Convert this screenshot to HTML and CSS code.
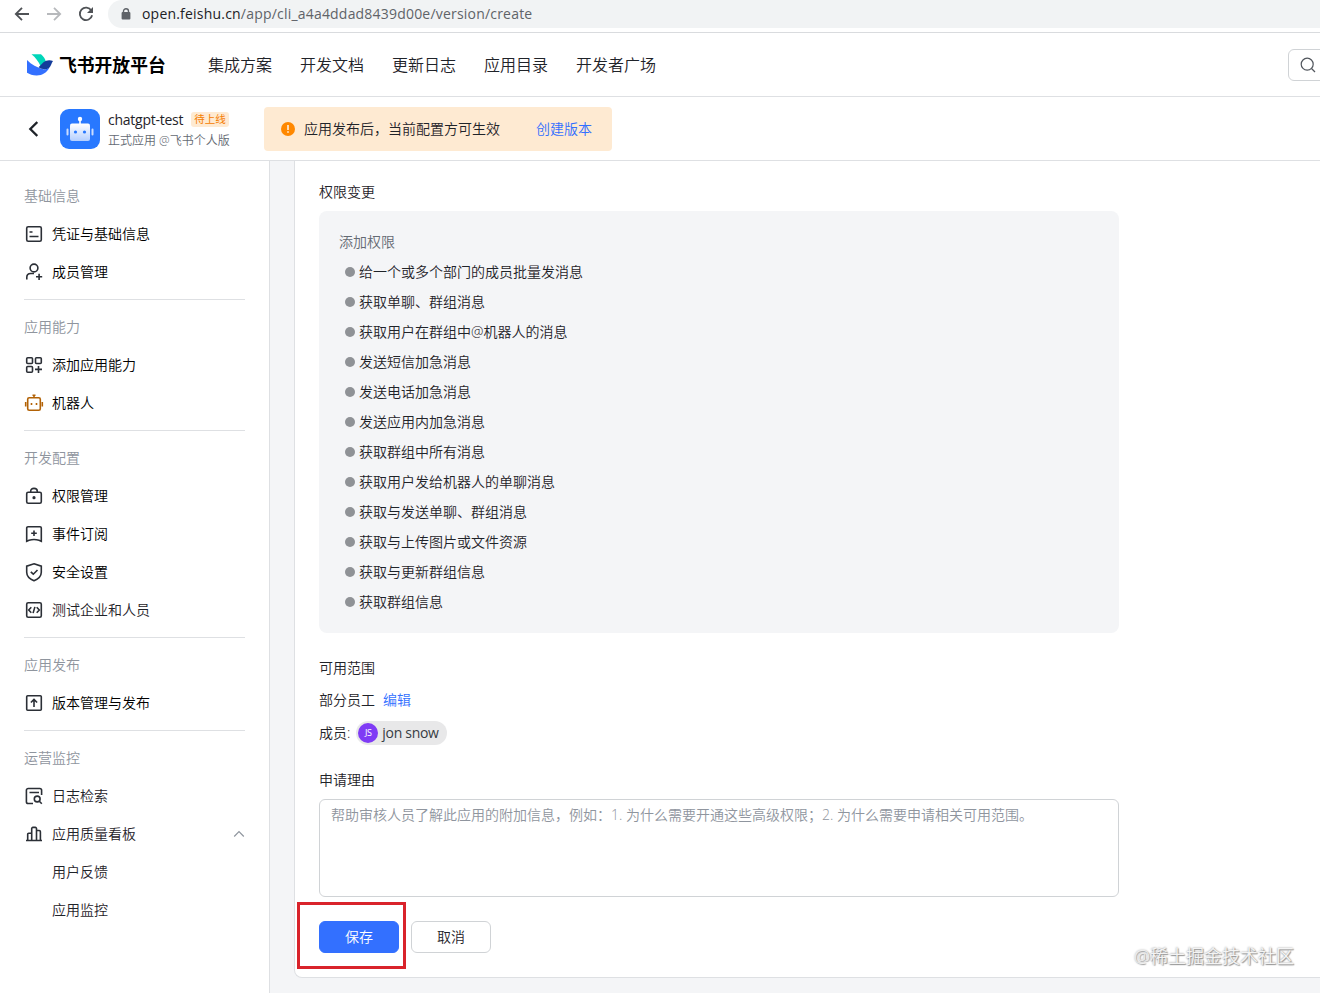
FILE: index.html
```html
<!DOCTYPE html>
<html lang="zh-CN">
<head>
    <meta charset="UTF-8">
    <meta name="viewport" content="width=device-width, initial-scale=1.0">
    <title>飞书开放平台</title>
    <link rel="stylesheet" href="styles.css">
</head>
<body>
    <!-- 浏览器地址栏 -->
    <div class="browser-bar">
        <svg class="browser-icon" width="16" height="16" viewBox="0 0 16 16"><path d="M15 8H2M8 1.8L1.8 8L8 14.2" stroke="#4f5256"/></svg>
        <svg class="browser-icon" width="16" height="16" viewBox="0 0 16 16"><path d="M1 8H14M8 1.8L14.2 8L8 14.2" stroke="#b7b9bc"/></svg>
        <svg class="browser-icon" width="16" height="16" viewBox="0 0 16 16"><path d="M13.3 4.6A6.2 6.2 0 1 0 14.1 9.2" stroke="#4f5256"/><path d="M15 1v6H9z" fill="#4f5256"/></svg>
        <div class="address">
            <svg width="10" height="12" viewBox="0 0 10 12"><path d="M2.5 5V3.2a2.5 2.5 0 0 1 5 0V5" fill="none" stroke="#5f6368" stroke-width="1.4"/><rect x="0.6" y="4" width="8.8" height="7.6" rx="1" fill="#5f6368"/></svg>
            <span class="url"><b>open.feishu.cn</b>/app/cli_a4a4ddad8439d00e/version/create</span>
        </div>
    </div>

    <!-- 顶部导航 -->
    <header class="nav">
        <svg class="logo" width="28" height="24" viewBox="0 0 28 24">
            <path d="M5.5 1.2H15C17.6 3.2 19.3 6 20 9L14.5 13C12.6 8.500 9.500 4.500 5.500 1.200z" fill="#00d6b9"/>
            <path d="M1 7C5.500 11.500 11 14.800 17.500 16.200C19.500 16.500 21.500 15.800 23.500 14.500C21 19.500 16.300 22.600 10.500 22.500C6.800 22.400 3.500 21.300 1 19.800z" fill="#3370ff"/>
            <path d="M27 8C24 6.700 20 7 17.500 9.300L12.500 14.200C15.500 16 19.500 17.300 23 15C25 13.500 25.300 10.300 27 8z" fill="#133c9a"/>
        </svg>
        <span class="brand">飞书开放平台</span>
        <nav class="nav-links">
            <a>集成方案</a>
            <a>开发文档</a>
            <a>更新日志</a>
            <a>应用目录</a>
            <a>开发者广场</a>
        </nav>
        <div class="search">
            <svg width="16" height="16" viewBox="0 0 16 16" fill="none" stroke="#51565d" stroke-width="1.2"><circle cx="7.200" cy="7.200" r="6"/><path d="M11.500 11.500L15 15"/></svg>
        </div>
    </header>

    <!-- 应用信息 -->
    <div class="app-bar">
        <svg class="back" width="12" height="18" viewBox="0 0 12 18"><path d="M11.300 2L4.300 9L11.300 16" fill="none" stroke="#1f2329" stroke-width="2.300"/></svg>
        <svg class="app-icon" width="40" height="40" viewBox="0 0 40 40">
            <defs>
                <linearGradient id="bot" x1="0" y1="0" x2="0" y2="1"><stop offset="0" stop-color="#fff"/><stop offset="1" stop-color="#b4cfff"/></linearGradient>
            </defs>
            <rect width="40" height="40" rx="9" fill="#2878ff"/>
            <circle cx="20" cy="10" r="2.200" fill="#fff"/>
            <path d="M19.200 11h1.600v4h-1.600z" fill="#fff"/>
            <rect x="10" y="14.500" width="20" height="17.500" rx="2" fill="url(#bot)"/>
            <path d="M7.500 20.500v5M32.500 20.500v5" stroke="#c9dcff" stroke-width="2" stroke-linecap="round"/>
            <circle cx="15.500" cy="23" r="1.600" fill="#2878ff"/>
            <circle cx="24.500" cy="23" r="1.600" fill="#2878ff"/>
        </svg>
        <div class="app-info">
            <div class="app-name"><span>chatgpt-test</span><span class="tag">待上线</span></div>
            <div class="app-desc">正式应用 @飞书个人版</div>
        </div>
        <div class="notice">
            <svg width="14" height="14" viewBox="0 0 14 14"><circle cx="7" cy="7" r="7" fill="#ff8800"/><path d="M7 3v5M7 9.300v1.500" stroke="#fff" stroke-width="1.400"/></svg>
            <span>应用发布后，当前配置方可生效</span>
            <a class="link">创建版本</a>
        </div>
    </div>

    <div class="main">
        <aside class="sidebar">
            <div class="group">
                <div class="group-title">基础信息</div>
                <div class="item"><svg class="icon" viewBox="0 0 20 20"><rect x="2.700" y="2.700" width="14.600" height="14.600" rx="1.500"/><path d="M5.500 8h3M5.500 12.500h9"/></svg>凭证与基础信息</div>
                <div class="item"><svg class="icon" viewBox="0 0 20 20"><circle cx="10" cy="6" r="3.900"/><path d="M2.800 17.500v-2.200c0-2.300 1.600-3.800 3.800-3.800H10M12 14.800h6.200M15.100 11.700v6.200"/></svg>成员管理</div>
            </div>
            <div class="group">
                <div class="group-title">应用能力</div>
                <div class="item"><svg class="icon" viewBox="0 0 20 20"><rect x="2.700" y="2.700" width="5.800" height="5.800" rx="1"/><rect x="11.500" y="2.700" width="5.800" height="5.800" rx="1"/><rect x="2.700" y="11.500" width="5.800" height="5.800" rx="1"/><path d="M11 14.400h7M14.500 10.900v7"/></svg>添加应用能力</div>
                <div class="item"><svg class="icon bot" viewBox="0 0 20 20"><rect x="3.700" y="4.700" width="12.600" height="12.600" rx="1.500"/><path d="M10 2v2.700M8.500 2.200h3M1.700 9v4.500M18.300 9v4.500"/><path d="M7.500 10v2M12.500 10v2"/></svg>机器人</div>
            </div>
            <div class="group">
                <div class="group-title">开发配置</div>
                <div class="item"><svg class="icon" viewBox="0 0 20 20"><rect x="2.700" y="6.200" width="14.600" height="11.100" rx="1.500"/><path d="M6.700 6V5.200c0-1.800 1.200-2.800 3.300-2.800s3.300 1 3.300 2.800V6"/><circle cx="10" cy="11.700" r="0.800" fill="#2b2f36"/></svg>权限管理</div>
                <div class="item"><svg class="icon" viewBox="0 0 20 20"><path d="M4 2.700h12a1.300 1.300 0 0 1 1.300 1.300v13.300L15 16.200Q10 14.900 5 16.200L2.700 17.300V4A1.300 1.300 0 0 1 4 2.700zM7.200 9.300h5.600M10 6.500v5.600"/></svg>事件订阅</div>
                <div class="item"><svg class="icon" viewBox="0 0 20 20"><path d="M10 1.800L17.300 4.200v6c0 4-3 6.700-7.300 8.500C5.700 16.900 2.700 14.200 2.700 10.200v-6zM6.800 9.800l2.500 2.400 4.200-4.200"/></svg>安全设置</div>
                <div class="item light"><svg class="icon" viewBox="0 0 20 20"><rect x="2.700" y="2.700" width="14.600" height="14.600" rx="1.500"/><path d="M7.300 7.300L4.700 10l2.600 2.700M12.700 7.300l2.600 2.700-2.600 2.700M10.900 6.900l-1.800 6.200"/></svg>测试企业和人员</div>
            </div>
            <div class="group">
                <div class="group-title">应用发布</div>
                <div class="item"><svg class="icon" viewBox="0 0 20 20"><rect x="2.700" y="2.700" width="14.600" height="14.600" rx="1"/><path d="M10 14V6.500M6.900 9.500L10 6.400l3.100 3.100"/></svg>版本管理与发布</div>
            </div>
            <div class="group">
                <div class="group-title">运营监控</div>
                <div class="item light"><svg class="icon" viewBox="0 0 20 20"><path d="M9 17.500H4.200a1.800 1.800 0 0 1-1.800-1.800V4.300a1.800 1.800 0 0 1 1.800-1.800h11.600a1.800 1.800 0 0 1 1.800 1.800V9M5.500 6.500h9.500"/><circle cx="13.200" cy="13" r="2.900"/><path d="M15.300 15.200l2.500 2.500"/></svg>日志检索</div>
                <div class="item light"><svg class="icon" viewBox="0 0 20 20"><path d="M2 16.500h16M3.700 16.500V10.300a1 1 0 0 1 1-1h3M7.700 16.500V4.600a1.200 1.200 0 0 1 1.200-1.200h2.400a1.200 1.200 0 0 1 1.200 1.200v11.900M12.500 6.500h2.700a1.200 1.200 0 0 1 1.200 1.200v8.800"/></svg>应用质量看板
                    <svg class="arrow" width="12" height="8" viewBox="0 0 12 8"><path d="M1.200 6.500L6 1.700l4.800 4.800" fill="none" stroke="#8f959e" stroke-width="1.200"/></svg>
                </div>
                <div class="item light sub">用户反馈</div>
                <div class="item light sub">应用监控</div>
            </div>
        </aside>

        <main class="content">
            <div class="card">
                <div class="label">权限变更</div>
                <div class="scopes">
                    <div class="scopes-title">添加权限</div>
                    <ul>
                        <li>给一个或多个部门的成员批量发消息</li>
                        <li>获取单聊、群组消息</li>
                        <li>获取用户在群组中@机器人的消息</li>
                        <li>发送短信加急消息</li>
                        <li>发送电话加急消息</li>
                        <li>发送应用内加急消息</li>
                        <li>获取群组中所有消息</li>
                        <li>获取用户发给机器人的单聊消息</li>
                        <li>获取与发送单聊、群组消息</li>
                        <li>获取与上传图片或文件资源</li>
                        <li>获取与更新群组信息</li>
                        <li>获取群组信息</li>
                    </ul>
                </div>
                <div class="label">可用范围</div>
                <div class="range">部分员工<a class="link">编辑</a></div>
                <div class="members">成员:
                    <span class="member"><span class="avatar">JS</span>jon snow</span>
                </div>
                <div class="label">申请理由</div>
                <textarea class="reason" placeholder="帮助审核人员了解此应用的附加信息，例如：1. 为什么需要开通这些高级权限；2. 为什么需要申请相关可用范围。"></textarea>
                <div class="actions">
                    <div class="save-wrap"><button class="btn primary">保存</button></div>
                    <button class="btn">取消</button>
                </div>
            </div>
        </main>
    </div>
    <div class="watermark">@稀土掘金技术社区</div>
</body>
</html>
```
FILE: styles.css
```css
* {
    box-sizing: border-box;
}
body {
    margin: 0;
    height: 993px;
    overflow: hidden;
    font-family: "Open Sans", "Noto Sans CJK SC", sans-serif;
    font-size: 14px;
    font-weight: 350;
    line-height: 22px;
    color: #1f2329;
    background-color: #fff;
}
svg {
    flex: none;
}

/* 浏览器地址栏 */
.browser-bar {
    display: flex;
    height: 33px;
    padding: 0 0 5px 14px;
    border-bottom: 1px solid #d9dbde;
    gap: 16px;
    align-items: center;
}
.browser-icon {
    fill: none;
    stroke-width: 1.8;
}
.address {
    flex: 1;
    display: flex;
    align-items: center;
    height: 28px;
    margin-left: -2px;
    padding-left: 13px;
    gap: 11px;
    background-color: #f1f3f4;
    border-radius: 14px 0 0 14px;
}
.url {
    font-size: 14px;
    font-weight: 400;
    letter-spacing: 0.2px;
    color: #5f6368;
}
.url b {
    font-weight: normal;
    color: #202124;
}

/* 顶部导航 */
.nav {
    display: flex;
    align-items: center;
    height: 64px;
    padding-left: 26px;
    border-bottom: 1px solid #dee0e3;
}
.brand {
    margin-left: 5px;
    width: 107px;
    font-size: 17.8px;
    font-weight: 700;
    white-space: nowrap;
    color: #000;
}
.nav-links {
    display: flex;
    gap: 28px;
    margin-left: 42px;
    font-size: 16px;
}
.search {
    display: flex;
    align-items: center;
    width: 60px;
    height: 32px;
    margin-left: auto;
    margin-right: -28px;
    padding-left: 11px;
    border: 1px solid #d0d3d6;
    border-radius: 6px;
}

/* 应用信息 */
.app-bar {
    display: flex;
    align-items: center;
    height: 64px;
    padding-left: 26px;
    border-bottom: 1px solid #dee0e3;
}
.app-icon {
    margin-left: 22px;
}
.app-info {
    width: 156px;
    padding-top: 2px;
    padding-left: 8px;
}
.app-name {
    display: flex;
    align-items: center;
    gap: 8px;
    height: 22px;
    font-size: 14px;
    font-weight: 400;
    letter-spacing: -0.25px;
}
.tag {
    padding: 0 3px;
    font-size: 10.5px;
    line-height: 15px;
    letter-spacing: 0;
    color: #f57c00;
    background-color: #feead2;
    border-radius: 3px;
}
.app-desc {
    font-size: 12px;
    line-height: 20px;
    color: #646a73;
}
.notice {
    display: flex;
    align-items: center;
    width: 348px;
    height: 44px;
    margin-left: 8px;
    padding: 0 20px 0 17px;
    background-color: #feead2;
    border-radius: 4px;
}
.notice span {
    margin-left: 9px;
}
.notice .link {
    margin-left: auto;
}
.link {
    color: #3370ff;
}

.main {
    display: flex;
    height: 832px;
}

/* 左侧菜单 */
.sidebar {
    width: 270px;
    padding: 16px 24px;
    border-right: 1px solid #dee0e3;
}
.group + .group {
    margin-top: 8px;
    padding-top: 8px;
    border-top: 1px solid #dee0e3;
}
.group-title {
    line-height: 38px;
    color: #8f959e;
}
.item {
    display: flex;
    align-items: center;
    height: 38px;
    color: #000;
}
.item.light {
    color: #1f2329;
}
.item.sub {
    padding-left: 28px;
}
.icon {
    width: 20px;
    height: 20px;
    margin-right: 8px;
    fill: none;
    stroke: #2b2f36;
    stroke-width: 1.6;
}
.icon.bot {
    stroke: #b26206;
}
.arrow {
    margin-left: auto;
}

/* 右侧内容 */
.content {
    flex: 1;
    padding-left: 24px;
    background-color: #f4f5f7;
}
.card {
    height: 817px;
    padding: 20px 24px 0;
    background-color: #fff;
    border: solid #dee0e3;
    border-width: 0 0 1px 1px;
    border-radius: 0 0 0 8px;
}
.scopes {
    width: 800px;
    height: 422px;
    margin: 8px 0 24px;
    padding: 16px 20px;
    line-height: 30px;
    background-color: #f4f5f7;
    border-radius: 8px;
}
.scopes-title {
    color: #646a73;
}
.scopes ul {
    margin: 0;
    padding: 0 0 0 6px;
    list-style: none;
}
.scopes li {
    display: flex;
    align-items: center;
    gap: 4px;
}
.scopes li::before {
    content: "";
    width: 10px;
    height: 10px;
    background-color: #8f9296;
    border-radius: 50%;
}
.range {
    margin: 10px 0;
}
.range .link {
    margin-left: 8px;
}
.members {
    display: flex;
    align-items: center;
    gap: 6px;
    height: 24px;
    margin-bottom: 24px;
}
.member {
    display: flex;
    align-items: center;
    gap: 4px;
    height: 24px;
    padding: 0 8px 0 2px;
    font-weight: 400;
    letter-spacing: -0.3px;
    color: #373c43;
    background-color: #e8e8e9;
    border-radius: 12px;
}
.avatar {
    width: 20px;
    height: 20px;
    font-size: 9px;
    line-height: 20px;
    text-align: center;
    color: #fff;
    background-color: #7f3bf5;
    border-radius: 50%;
}
.reason {
    display: block;
    width: 800px;
    height: 98px;
    margin-top: 8px;
    padding: 4px 11px;
    font: inherit;
    border: 1px solid #d0d3d6;
    border-radius: 6px;
    resize: none;
}
.reason::placeholder {
    color: #8f959e;
}
.actions {
    display: flex;
    gap: 12px;
    margin-top: 24px;
}
.btn {
    width: 80px;
    height: 32px;
    padding: 0;
    font: inherit;
    color: #1f2329;
    background-color: #fff;
    border: 1px solid #d0d3d6;
    border-radius: 6px;
}
.btn.primary {
    display: block;
    color: #fff;
    background-color: #3370ff;
    border-color: #3370ff;
}
/* 红框标注 */
.save-wrap {
    position: relative;
}
.save-wrap::after {
    content: "";
    position: absolute;
    left: -22px;
    top: -19px;
    width: 103px;
    height: 61px;
    border: 3px solid #d9232b;
}

.watermark {
    position: absolute;
    right: 26px;
    bottom: 26px;
    font-size: 18px;
    color: #f4f4f4;
    text-shadow: 0 0 2px #888, 1px 1px 1px #999;
}
```
